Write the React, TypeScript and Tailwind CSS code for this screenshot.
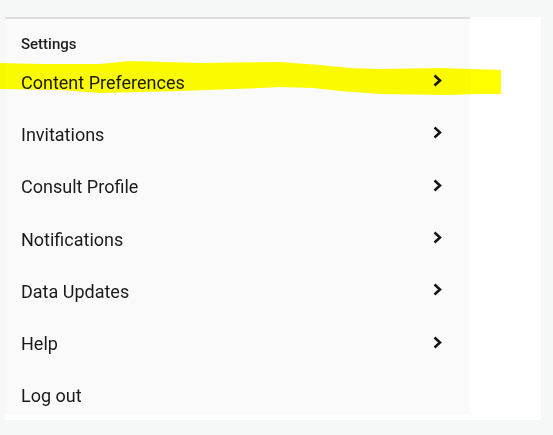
import React from 'react';

const items = [
  { label: 'Content Preferences', arrow: true },
  { label: 'Invitations', arrow: true },
  { label: 'Consult Profile', arrow: true },
  { label: 'Notifications', arrow: true },
  { label: 'Data Updates', arrow: true },
  { label: 'Help', arrow: true },
  { label: 'Log out', arrow: false },
];

const Chevron = () => (
  <svg width="11" height="13" viewBox="0 0 11 13" className="mb-[3px]">
    <polyline
      points="2.5,1.5 8,6.5 2.5,11.5"
      fill="none"
      stroke="#141414"
      strokeWidth="2.5"
      strokeLinejoin="miter"
    />
  </svg>
);

export default function App() {
  return (
    <div
      className="relative w-[553px] h-[435px] bg-[#f6f8f8] pt-4 pl-[5px] overflow-hidden"
      style={{ fontFamily: 'Roboto, "Noto Sans", sans-serif' }}
    >
      <div className="w-[536px] h-[403px] bg-white">
        <div className="w-[465px] h-[397px] mt-px bg-[#fafafa] border-t-2 border-[#dedede]">
          {/* Header */}
          <div className="pl-4 pt-4 pb-[3px] text-[15px] leading-[18px] font-medium text-[#1e1e1e]">
            Settings
          </div>

          {/* Rows */}
          <div className="flex flex-col">
            {items.map((item) => (
              <div
                key={item.label}
                className="h-[52.3px] flex items-center justify-between pl-4 pr-[27px] text-[18px] text-[#1a1a1a]"
              >
                <span>{item.label}</span>
                {item.arrow && <Chevron />}
              </div>
            ))}
          </div>
        </div>
      </div>

      {/* Highlighter stroke */}
      <svg
        className="absolute left-0 top-0 pointer-events-none mix-blend-multiply"
        width="553"
        height="435"
        viewBox="0 0 553 435"
      >
        <path
          d="M0 63 L40 64 L100 64 L130 61 L200 63 L280 62 L320 65 L350 68 L380 69 L440 68 L501 70 L501 94 L475 94 L450 95 L380 94 L340 91 L313 88 L280 87 L260 88 L180 91 L100 93 L60 90 L0 89 Z"
          fill="#ffff00"
        />
      </svg>
    </div>
  );
}
